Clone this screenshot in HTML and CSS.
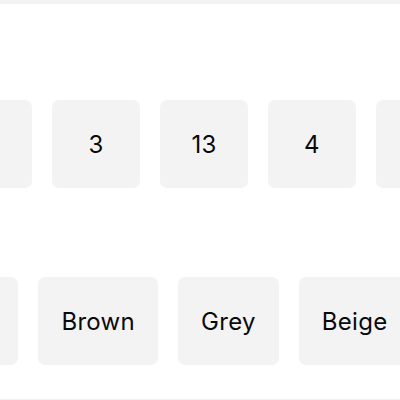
FILE: index.html
```html
<!DOCTYPE html>
<html lang="en">
<head>
    <meta charset="UTF-8">
    <meta name="viewport" content="width=device-width, initial-scale=1.0">
    <title>Filter</title>
    <link rel="stylesheet" href="styles.css">
</head>
<body>

<div class="top-bar"></div>

<div class="section">
    <div class="track track-sizes">
        <div class="chip chip-square">2</div>
        <div class="chip chip-square">3</div>
        <div class="chip chip-square">13</div>
        <div class="chip chip-square">4</div>
        <div class="chip chip-square">5</div>
    </div>

    <div class="track track-colors">
        <div class="chip">Black</div>
        <div class="chip">Brown</div>
        <div class="chip">Grey</div>
        <div class="chip">Beige</div>
        <div class="chip">White</div>
    </div>
</div>

<div class="bottom-bar"></div>

</body>
</html>
```

FILE: styles.css
```css
body {
    font-family: Inter, "Noto Sans", sans-serif;
    background-color: white;
    margin: 0;
    height: 400px;
    overflow: hidden;
}
.top-bar {
    height: 4px;
    background-color: #f2f2f2;
}
.section {
    padding-top: 96px;
    height: 299px;
    overflow: hidden;
}
.track {
    display: flex;
    gap: 20px;
    white-space: nowrap;
}
.track-sizes {
    margin-left: -56px;
}
.track-colors {
    margin-top: 89px;
    margin-left: -91px;
}
.chip {
    flex: none;
    height: 88px;
    padding: 0 23px;
    display: flex;
    align-items: center;
    justify-content: center;
    background-color: #f3f3f3;
    border-radius: 7px;
    font-size: 24px;
    letter-spacing: 0.3px;
    color: #0a0a0a;
}
.chip-square {
    width: 88px;
    padding: 0;
}
.bottom-bar {
    height: 1px;
    background-color: #efefef;
}
```
